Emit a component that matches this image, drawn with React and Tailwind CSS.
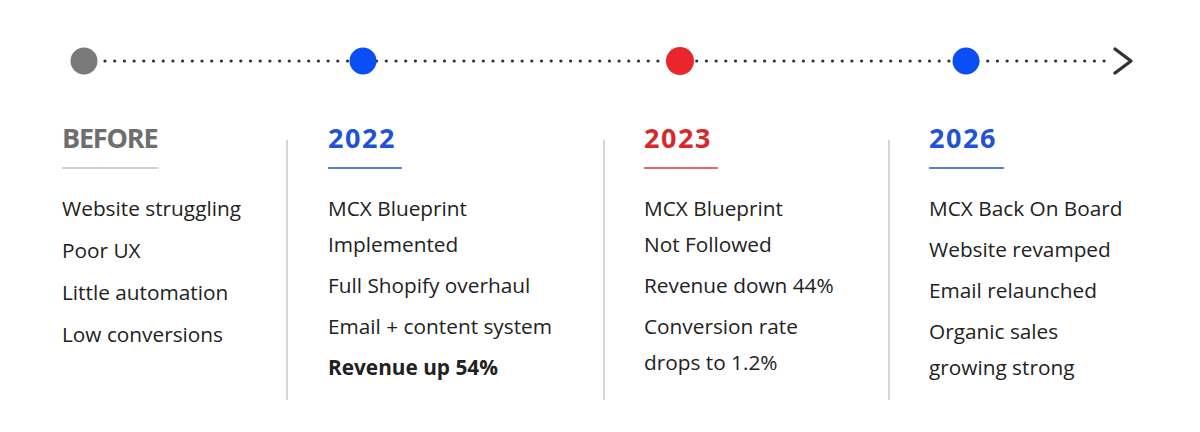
const font = { fontFamily: '"Open Sans", "Lato", sans-serif' };

const columns = [
  {
    title: "BEFORE",
    titleClass: "text-[#6e6e6e] tracking-[-1.2px]",
    lineClass: "bg-[#cfcfcf] w-[96px]",
    pad: "pl-[62px] w-[286px]",
    items: [["Website struggling"], ["Poor UX"], ["Little automation"], ["Low conversions"]],
    gap: "gap-[6px]",
  },
  {
    title: "2022",
    titleClass: "text-[#1f52d6] tracking-[1.6px]",
    lineClass: "bg-[#5a82d4] w-[74px]",
    pad: "pl-[40px] w-[315px]",
    items: [["MCX Blueprint", "Implemented"], ["Full Shopify overhaul"], ["Email + content system"], ["Revenue up 54%", true]],
    gap: "gap-[5px]",
  },
  {
    title: "2023",
    titleClass: "text-[#d8282c] tracking-[1.6px]",
    lineClass: "bg-[#e26b6b] w-[74px]",
    pad: "pl-[39px] w-[283px]",
    items: [["MCX Blueprint", "Not Followed"], ["Revenue down 44%"], ["Conversion rate", "drops to 1.2%"]],
    gap: "gap-[5px]",
  },
  {
    title: "2026",
    titleClass: "text-[#1f52d6] tracking-[1.6px]",
    lineClass: "bg-[#5a82d4] w-[75px]",
    pad: "pl-[39px] flex-1",
    items: [["MCX Back On Board"], ["Website revamped"], ["Email relaunched"], ["Organic sales", "growing strong"]],
    gap: "gap-[5px]",
  },
];

function Timeline() {
  const dots = [];
  for (let x = 105; x < 1112; x += 9.7) dots.push(x);
  return (
    <svg width="1200" height="120" viewBox="0 0 1200 120" className="block">
      {dots.map((x, i) => (
        <circle key={i} cx={x} cy="61" r="1.6" fill="#2f2f2f" />
      ))}
      <circle cx="84" cy="61" r="13.5" fill="#7a7a7a" />
      <circle cx="363" cy="61" r="13.5" fill="#0a4ff5" />
      <circle cx="680" cy="61" r="14" fill="#e8262b" />
      <circle cx="966" cy="61" r="13.5" fill="#0a4ff5" />
      <path d="M1115 49 L1131 61 L1115 73" fill="none" stroke="#333" strokeWidth="3.4" strokeLinecap="round" strokeLinejoin="round" />
    </svg>
  );
}

function Divider() {
  return <div className="w-[2px] bg-[#d6d6d6] mt-[20px] h-[260px] shrink-0" />;
}

function Column({ col }) {
  return (
    <div className={`flex flex-col shrink-0 ${col.pad}`}>
      <h2 className="text-[27px] leading-[36px] font-bold">
        <span className={col.titleClass}>{col.title}</span>
      </h2>
      <div className={`h-[2px] mt-[11px] ${col.lineClass}`} />
      <div className={`flex flex-col mt-[21px] ${col.gap}`}>
        {col.items.map((it, i) => {
          const bold = it[1] === true;
          const lines = it.filter((l) => typeof l === "string");
          return (
            <div key={i} className={`text-[20.8px] leading-[36px] text-[#222222] ${bold ? "font-bold" : ""}`}>
              {lines.map((l, j) => (
                <div key={j}>{l}</div>
              ))}
            </div>
          );
        })}
      </div>
    </div>
  );
}

export default function App() {
  return (
    <div className="w-[1200px] h-[432px] bg-white overflow-hidden" style={font}>
      <Timeline />
      <div className="flex">
        <Column col={columns[0]} />
        <Divider />
        <Column col={columns[1]} />
        <Divider />
        <Column col={columns[2]} />
        <Divider />
        <Column col={columns[3]} />
      </div>
    </div>
  );
}
